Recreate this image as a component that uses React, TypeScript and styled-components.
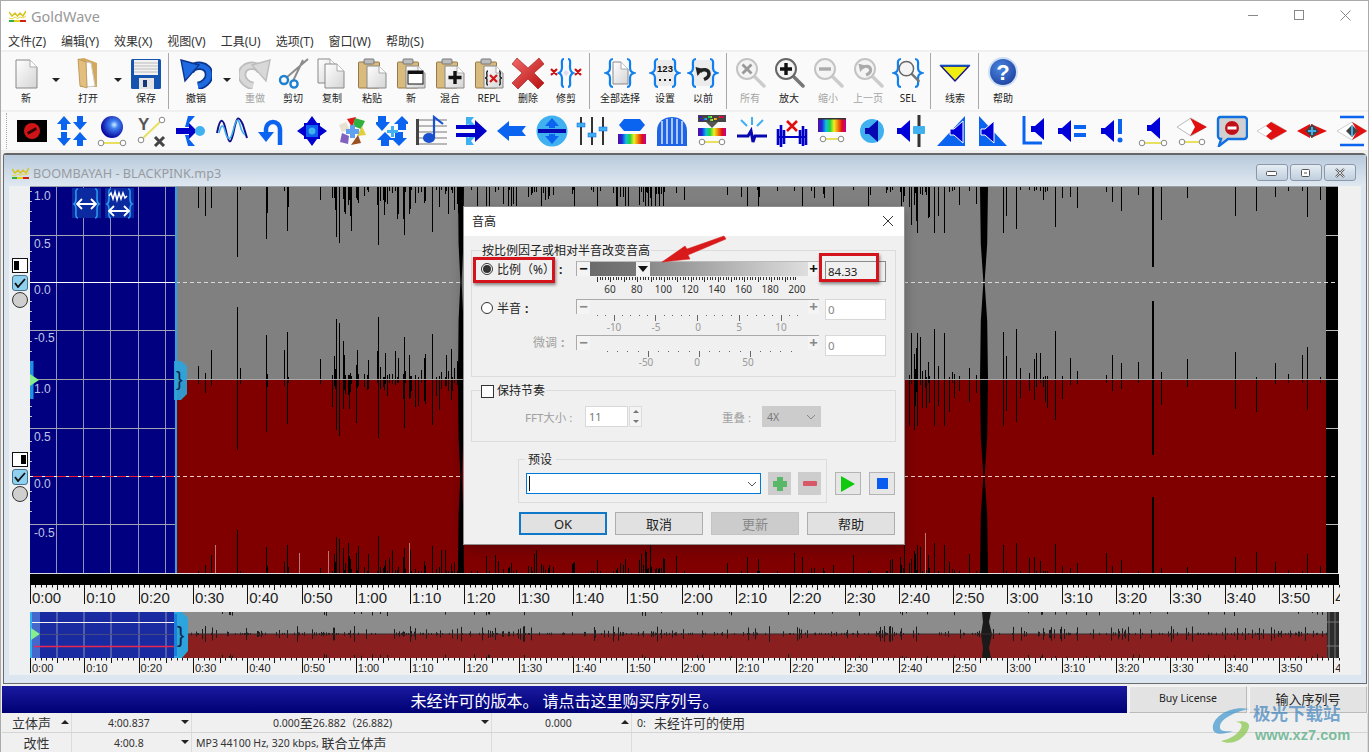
import React from "react";
import styled, { createGlobalStyle } from "styled-components";

const sans = `"Noto Sans", "Noto Sans CJK SC", sans-serif`;

const Global = createGlobalStyle`
  html, body { margin: 0; padding: 0; background: #f0f0f0; }
  * { box-sizing: border-box; }
`;

/* ---------- shell ---------- */
const Page = styled.div`
  position: relative; width: 1369px; height: 752px; overflow: hidden;
  background: #f0f0f0; font-family: ${sans}; color: #222;
  border-top: 1px solid #aaa; border-left: 1px solid #aaa; border-right: 1px solid #aaa;
  display: flex; flex-direction: column;
`;
const TitleBar = styled.div`
  height: 29px; background: #fff; display: flex; align-items: center; padding-left: 8px; flex: none;
`;
const AppName = styled.span`margin-left: 5px; font-size: 14.5px; color: #989898; flex: 1;`;
const WinButtons = styled.div`display: flex; margin-right: 0;`;
const WinButton = styled.div`width: 46px; height: 29px; display: flex; align-items: center; justify-content: center;`;
const MenuBar = styled.div`
  height: 20px; background: #fff; display: flex; gap: 15px; padding: 2px 0 0 7px; align-items: center;
  font-size: 12px; color: #333; flex: none;
`;
const Toolbar = styled.div`
  margin-top: 2px; height: 58px; background: #fafafa; display: flex; padding-left: 7px; flex: none;
`;
const ToolButton = styled.div<{ $w: number; $off?: boolean }>`
  width: ${p => p.$w}px; flex: none; display: flex; flex-direction: column; align-items: center;
  padding-top: 5px; font-size: 10px; line-height: 14px; color: ${p => (p.$off ? "#a4a4a4" : "#222")};
  white-space: nowrap;
  svg { display: block; margin-bottom: 2px; }
`;
const Caret = styled.div<{ $w: number }>`
  width: ${p => p.$w}px; flex: none; display: flex; justify-content: center; padding-top: 26px;
  &::after { content: ""; border-left: 4px solid transparent; border-right: 4px solid transparent; border-top: 4px solid #222; height: 0; }
`;
const Divider = styled.div<{ $w: number }>`
  width: ${p => p.$w}px; flex: none; display: flex; justify-content: center; padding: 1px 0;
  &::after { content: ""; width: 1px; background: #a8a8a8; }
`;
const IconBar = styled.div`
  margin-top: 2px; height: 39px; background: #fafafa; display: flex; align-items: center; flex: none; padding-left: 5px;
  border-bottom: 1px solid #eee;
`;
const Gripper = styled.div`width: 0; height: 36px; border-left: 1px dotted #aaa; margin-right: 5px;`;
const IconCell = styled.div`width: 40px; flex: none; display: flex; justify-content: center;`;

/* ---------- child window ---------- */
const ChildWindow = styled.div`
  margin: 2px 1px 0 2px; height: 531px; flex: none; border: 1px solid #6c6c6c; border-top: 2px solid #666;
  border-radius: 3px 5px 0 0; background: #dbe6f0; display: flex; flex-direction: column;
`;
const ChildTitle = styled.div`
  height: 31px; flex: none; display: flex; align-items: center; padding: 4px 10px 0 8px;
  background: linear-gradient(#b9cadc, #dfe8f1);
`;
const ChildName = styled.span`margin-left: 4px; font-size: 12.7px; color: #979ba0; flex: 1;`;
const ChildButton = styled.div`
  width: 32px; height: 17px; margin-left: 2px; border: 1px solid #8b98a8; border-radius: 3px;
  background: linear-gradient(#e6edf4, #bfcedd); display: flex; align-items: center; justify-content: center;
`;
const Client = styled.div`
  margin: 0 5px; background: #f0f0f0; height: 489px; flex: none; display: grid;
  grid-template-columns: 21px 1308px 1fr; grid-template-rows: 388px 38px 1fr;
  svg { display: block; }
`;
const Rail = styled.div`
  grid-row: 1 / 4; display: flex; flex-direction: column; background: #eef0f1;
`;
const RailChannel = styled.div`
  height: 194px; padding-top: 72px; display: flex; flex-direction: column; align-items: center; gap: 2px;
`;
const MonoBox = styled.div<{ $right?: boolean }>`
  width: 16px; height: 15px; background: #fff; border: 1px solid #111; display: flex;
  justify-content: ${p => (p.$right ? "flex-end" : "flex-start")}; align-items: center; padding: 0 1px;
  &::after { content: ""; width: 5px; height: 9px; background: #000; }
`;
const CheckBox = styled.div`
  width: 16px; height: 16px; border-radius: 3px; border: 1px solid #44728f; background: #8fd0ee;
  display: flex; align-items: center; justify-content: center;
`;
const RoundBox = styled.div`
  width: 16px; height: 16px; border-radius: 50%; border: 1px solid #333; background: #cfcfcf; margin-top: -1px;
`;
const ChartCell = styled.div`width: 1308px;`;
const BlankCell = styled.div``;

/* ---------- status ---------- */
const Banner = styled.div`
  margin-top: 2px; height: 27px; display: flex; gap: 2px; padding: 0 0 0 1px; flex: none;
`;
const BannerText = styled.div`
  width: 1125px; background: linear-gradient(#1a1aa0, #000074); color: #fff; font-size: 16px;
  display: flex; align-items: center; justify-content: center; white-space: pre;
`;
const BannerButton = styled.div<{ $w: number; $size: number }>`
  width: ${p => p.$w}px; background: #e3e3e3; border: 1px solid #f6f6f6; border-right-color: #bbb; border-bottom-color: #bbb;
  font-size: ${p => p.$size}px; display: flex; align-items: center; justify-content: center; color: #222; padding-bottom: 3px;
`;
const StatusRow = styled.div`
  height: 20px; flex: none; display: grid; grid-template-columns: 70px 120px 300px 140px 1fr;
  margin-left: 1px; border-bottom: 1px solid #d4d4d4; font-size: 10.5px; color: #333; padding-bottom: 1px;
`;
const StatusCell = styled.div<{ $pad?: number; $center?: boolean }>`
  display: flex; align-items: center; position: relative; border-right: 1px solid #dcdcdc;
  padding-left: ${p => p.$pad ?? 0}px; white-space: nowrap;
  ${p => (p.$center ? "justify-content: center;" : "")}
`;
const Big = styled.span`font-size: 13px;`;
const StatusCaret = styled.i<{ $up?: boolean }>`
  position: absolute; right: 2px; top: 7px; border-left: 4px solid transparent; border-right: 4px solid transparent;
  ${p => (p.$up ? "border-bottom: 4px solid #222;" : "border-top: 4px solid #222;")}
`;
const Watermark = styled.div`
  position: absolute; left: 1206px; top: 700px; width: 152px; height: 50px; pointer-events: none;
`;
const MarkTitle = styled.div`
  position: absolute; left: 46px; top: 1px; font-size: 17.5px; line-height: 22px; font-weight: 700;
  color: rgba(70, 135, 190, .72); white-space: nowrap;
`;
const MarkUrl = styled.div`
  position: absolute; left: 48px; top: 25px; font-size: 14.6px; line-height: 18px; font-weight: 700;
  font-family: "Liberation Sans", sans-serif; color: rgba(70, 165, 120, .7);
`;

/* ---------- dialog ---------- */
const Dialog = styled.div`
  position: absolute; left: 463px; top: 206px; width: 440px; height: 337px; background: #f0f0f0;
  box-shadow: 0 0 0 1px #8f8f8f, 0 4px 12px rgba(0,0,0,.3); font-size: 12px; color: #222;
`;
const DialogTitle = styled.div`
  height: 29px; background: #fff; display: flex; align-items: center; justify-content: space-between; padding: 0 10px 2px 8px; font-size: 12px;
`;
const Group = styled.div<{ $h: number; $mt: number; $ml?: number; $w?: number; $pt?: number }>`
  position: relative; height: ${p => p.$h}px; margin-top: ${p => p.$mt}px; margin-left: ${p => p.$ml ?? 7}px;
  width: ${p => p.$w ?? 425}px; border: 1px solid #dcdcdc; padding-top: ${p => p.$pt ?? 0}px;
`;
const Legend = styled.div<{ $x: number }>`
  position: absolute; left: ${p => p.$x}px; top: -8px; background: #f0f0f0; padding: 0 1px 0 0; line-height: 16px;
  display: flex; align-items: center; gap: 3px; white-space: nowrap;
`;
const SlideRow = styled.div<{ $h: number }>`
  display: flex; height: ${p => p.$h}px; padding-left: 9px;
`;
const RowLabel = styled.div<{ $off?: boolean; $indent?: number; $shift?: number }>`
  width: 95px; height: 16px; flex: none; display: flex; align-items: center; gap: 4px; white-space: nowrap;
  color: ${p => (p.$off ? "#a0a0a0" : "#222")}; padding-left: ${p => p.$indent ?? 0}px; margin-top: ${p => p.$shift ?? 0}px;
`;
const Colon = styled.span`margin-left: 0; font-weight: 700;`;
const Radio = styled.span<{ $on?: boolean }>`
  width: 12px; height: 12px; border-radius: 50%; border: 1px solid #333; background: #fff; flex: none;
  display: flex; align-items: center; justify-content: center;
  &::after { content: ""; width: 8px; height: 8px; border-radius: 50%; background: ${p => (p.$on ? "#333" : "transparent")}; }
`;
const SlideCol = styled.div`width: 243px; flex: none;`;
const Track = styled.div<{ $off?: boolean }>`
  height: 15px; display: flex; border-top: 1px solid ${p => (p.$off ? "#aaa" : "#bbb")}; border-left: 1px solid #aaa;
  background: #f0f0f0;
`;
const TrackEnd = styled.div<{ $w: number; $off?: boolean }>`
  width: ${p => p.$w}px; flex: none; font-size: 15px; font-weight: 700; line-height: 13px; text-align: center;
  color: ${p => (p.$off ? "#888" : "#111")}; background: #f4f4f4;
`;
const TrackDark = styled.div`width: 46px; background: linear-gradient(90deg, #6b6b6b, #777);`;
const TrackThumb = styled.div`
  width: 14px; background: #f2f2f2; display: flex; align-items: center; justify-content: center;
  &::after { content: ""; border-left: 5px solid transparent; border-right: 5px solid transparent; border-top: 6px solid #111; }
`;
const TrackRest = styled.div<{ $off?: boolean }>`
  flex: 1; background: ${p => (p.$off ? "#f0f0f0" : "linear-gradient(90deg, #8a8a8a, #dedede)")};
`;
const NumBox = styled.div<{ $off?: boolean; $w?: number; $h?: number }>`
  width: ${p => p.$w ?? 61}px; height: ${p => p.$h ?? 21}px; flex: none; margin-left: 6px; background: ${p => (p.$off ? "#fff" : "#f0f0f0")};
  border: 1px solid ${p => (p.$off ? "#d8d8d8" : "#8a8a8a")}; padding-left: 2px; font-size: 11.5px; line-height: 19px;
  color: ${p => (p.$off ? "#888" : "#222")};
`;
const Highlight = styled.div<{ $x: number; $y: number; $w: number; $h: number }>`
  position: absolute; left: ${p => p.$x}px; top: ${p => p.$y}px; width: ${p => p.$w}px; height: ${p => p.$h}px;
  border: 3px solid #d5131c; box-shadow: 1px 2px 3px rgba(0,0,0,.45);
`;
const ArrowLayer = styled.svg`position: absolute; left: 0; top: 0; pointer-events: none;`;
const OptRow = styled.div`display: flex; align-items: center; height: 21px; margin-top: 15px; font-size: 11.5px; color: #a0a0a0;`;
const OptLabel = styled.span<{ $w: number; $ml: number }>`width: ${p => p.$w}px; margin-left: ${p => p.$ml}px; white-space: nowrap;`;
const Spin = styled.div`
  width: 43px; height: 21px; background: #fff; border: 1px solid #d8d8d8; padding-left: 3px; font-size: 11px; line-height: 19px; color: #777;
`;
const SpinBtns = styled.div`
  width: 13px; height: 21px; margin-left: 1px; display: flex; flex-direction: column; justify-content: space-around; align-items: center;
  background: #f4f4f4; border: 1px solid #dcdcdc;
`;
const SpinTip = styled.i<{ $down?: boolean }>`
  border-left: 3px solid transparent; border-right: 3px solid transparent;
  ${p => (p.$down ? "border-top: 3px solid #777;" : "border-bottom: 3px solid #777;")}
`;
const Drop = styled.div`
  width: 59px; height: 21px; background: #ccc; display: flex; align-items: center; justify-content: space-between;
  padding: 0 5px 0 5px; font-size: 10.5px; color: #777;
`;
const PresetLine = styled.div`display: flex; margin-top: 17px;`;
const PresetInner = styled.div`display: flex; align-items: center; padding: 12px 0 0 7px; gap: 7px;`;
const Combo = styled.div`
  width: 235px; height: 21px; background: #fff; border: 1px solid #0078d7; display: flex; align-items: center;
  justify-content: space-between; padding: 0 3px 0 2px; margin-right: 0;
`;
const TextCaret = styled.div`width: 1px; height: 15px; background: #111;`;
const IconBtn = styled.div<{ $w: number; $off?: boolean; $ml?: number }>`
  width: ${p => p.$w}px; height: 23px; flex: none; margin-left: ${p => p.$ml ?? 0}px; background: ${p => (p.$off ? "#cdcdcd" : "#e6e6e6")};
  border: 1px solid ${p => (p.$off ? "#cdcdcd" : "#b4b4b4")}; display: flex; align-items: center; justify-content: center;
`;
const PlayGroup = styled.div`display: flex; gap: 8px; margin-left: 8px; padding-top: 13px; align-items: flex-start;`;
const Footer = styled.div`display: flex; gap: 8px; margin: 9px 0 0 55px;`;
const FootBtn = styled.div<{ $primary?: boolean; $off?: boolean }>`
  width: 88px; height: 23px; display: flex; align-items: center; justify-content: center; font-size: 13px;
  background: ${p => (p.$off ? "#cccccc" : "#e1e1e1")}; color: ${p => (p.$off ? "#888" : "#222")};
  border: ${p => (p.$primary ? "2px solid #0f78c8" : p.$off ? "1px solid #c4c4c4" : "1px solid #adadad")};
`;

/* ---------- icon helpers ---------- */
const I: React.FC<{ children: React.ReactNode; s?: number }> = ({ children, s = 32 }) => (
  <svg width={s} height={s} viewBox="0 0 32 32">{children}</svg>
);
const B1 = "#0a64f0", NV = "#0000c8", LB = "#3fb0f0";

const rainbowStops = ["#5a0a9c", "#1a2ae0", "#10c0e0", "#20d040", "#f0f020", "#f08010", "#e01010", "#c000a0"];
const Rb = ({ id }: { id: string }) => (
  <defs><linearGradient id={id}>{rainbowStops.map((c, i) => <stop key={c} offset={i / 7} stopColor={c} />)}</linearGradient></defs>
);
const PageSheet = ({ x = 6, y = 3, w = 21, h = 28, id = "pg" }: { x?: number; y?: number; w?: number; h?: number; id?: string }) => (
  <>
    <defs><linearGradient id={id} x1="0" y1="0" x2="1" y2="1"><stop offset="0" stopColor="#fff" /><stop offset="1" stopColor="#d4d4d4" /></linearGradient></defs>
    <path d={`M${x} ${y}h${w - 7}l7 7v${h - 7}H${x}z`} fill={`url(#${id})`} stroke="#888" />
    <path d={`M${x + w - 7} ${y}v7h7`} fill="#fff" stroke="#aaa" />
  </>
);
const Clip = ({ id, children }: { id: string; children?: React.ReactNode }) => (
  <>
    <rect x="2.5" y="5" width="21" height="26" rx="1" fill="#d9bb7e" stroke="#96794a" />
    <rect x="8" y="2" width="10" height="5" rx="1" fill="#bdbdbd" stroke="#777" />
    <PageSheet x={11} y={9} w={19} h={22} id={id} />
    {children}
  </>
);
const BraceL = ({ c = "#1080f0" }: { c?: string }) => (
  <path d="M9 2C5 2 6 6 6 10c0 4-1 5-4 6 3 1 4 2 4 6 0 4-1 8 3 8" fill="none" stroke={c} strokeWidth="2.2" />
);
const BraceR = ({ c = "#1080f0" }: { c?: string }) => (
  <path d="M23 2c4 0 3 4 3 8 0 4 1 5 4 6-3 1-4 2-4 6 0 4 1 8-3 8" fill="none" stroke={c} strokeWidth="2.2" />
);
const Lens = ({ off, children }: { off?: boolean; children?: React.ReactNode }) => (
  <>
    <path d="M20 19l10 10" stroke={off ? "#ccc" : "#777"} strokeWidth="3.5" strokeLinecap="round" />
    <circle cx="13" cy="12" r="10" fill="#f4f4f4" stroke={off ? "#c4c4c4" : "#666"} strokeWidth="2" />
    {children}
  </>
);
const Knob = ({ y = 28, a = 4, b = 28 }: { y?: number; a?: number; b?: number }) => (
  <>
    <path d={`M${a} ${y}H${b}`} stroke="#e8e060" strokeWidth="2" />
    <circle cx={a} cy={y} r="2.8" fill="#fff" stroke="#888" />
    <circle cx={b} cy={y} r="2.8" fill="#fff" stroke="#888" />
  </>
);
const Spk = ({ x = 0, y = 0, c = NV, edge }: { x?: number; y?: number; c?: string; edge?: string }) => (
  <path transform={`translate(${x} ${y})`} d="M0 8h4L13 0v22L4 14H0z" fill={c} stroke={edge ?? "none"} strokeWidth="1" />
);
const Up = ({ x, y, c = B1, flip }: { x: number; y: number; c?: string; flip?: boolean }) => (
  <path d={flip ? `M${x} ${y + 14}l-7-8h4v-6h6v6h4z` : `M${x} ${y}l7 8h-4v6h-6v-6h-4z`} fill={c} />
);
const Dia = ({ c = "#fff" }: { c?: string }) => <path d="M1 16L16 7l15 9-15 9z" fill={c} stroke="#bbb" strokeWidth=".7" />;

const UndoShape = ({ dark, mid }: { dark: string; mid: string }) => (
  <>
    <path d="M10 14C14 6 29 7 29 18c0 6-6 10-11 11" fill="none" stroke={dark} strokeWidth="8.5" />
    <path d="M10 14C14 6 29 7 29 18c0 6-6 10-11 11" fill="none" stroke={mid} strokeWidth="5" />
    <path d="M1 3l18 5-14 16z" fill={mid} stroke={dark} strokeWidth="1.4" />
  </>
);

const row1 = [
  { k: "new", w: 36, l: "新", i: <PageSheet id="p1" /> },
  { k: "c1", caret: 24 },
  {
    k: "open", w: 40, l: "打开", i: (
      <>
        <path d="M6 2l6-1 13 5v24H8z" fill="#d4a85c" />
        <path d="M14 5l5 1 4 23-8 1z" fill="#fff" stroke="#ccc" />
        <path d="M6 2l8 3 1 26-7-2z" fill="#e2bf7e" stroke="#b08c4c" strokeWidth=".7" />
      </>
    )
  },
  { k: "c2", caret: 20 },
  {
    k: "save", w: 36, l: "保存", i: (
      <>
        <rect x="1" y="2" width="30" height="30" rx="1.5" fill="#1454ae" />
        <rect x="4" y="3" width="24" height="15" fill="#f2f2f2" />
        <path d="M4 6h24M4 9h24M4 12h24M4 15h24" stroke="#bbb" />
        <rect x="9" y="21" width="15" height="11" fill="#e4e4e4" />
        <rect x="13" y="23" width="4" height="7" fill="#123a78" />
      </>
    )
  },
  { k: "s1", sep: 8 },
  { k: "undo", w: 48, l: "撤销", i: <UndoShape dark="#0a3690" mid="#1e6ae0" /> },
  { k: "c3", caret: 14 },
  { k: "redo", w: 42, l: "重做", off: true, i: <g transform="matrix(-1 0 0 1 32 0)"><UndoShape dark="#bcbcbc" mid="#d8d8d8" /></g> },
  {
    k: "cut", w: 34, l: "剪切", i: (
      <>
        <path d="M9 21L31 2M16 24L26 3" stroke="#8c8c8c" strokeWidth="2" />
        <circle cx="7" cy="23" r="4" fill="none" stroke="#1f82d0" strokeWidth="2.4" />
        <circle cx="17" cy="27" r="3.6" fill="none" stroke="#1f82d0" strokeWidth="2.4" />
      </>
    )
  },
  { k: "copy", w: 44, l: "复制", i: <><PageSheet x={2} y={2} w={19} h={24} id="p2" /><PageSheet x={9} y={7} w={19} h={24} id="p3" /></> },
  { k: "paste", w: 36, l: "粘贴", i: <Clip id="p4" /> },
  {
    k: "pn", w: 42, l: "新", i: <Clip id="p5"><rect x="13" y="14" width="15" height="13" fill="#fff" stroke="#111" /><rect x="13" y="14" width="15" height="3" fill="#111" /></Clip>
  },
  { k: "mix", w: 36, l: "混合", i: <Clip id="p6"><path d="M21 14v13M14.500 20.500h13" stroke="#111" strokeWidth="3.4" /></Clip> },
  {
    k: "repl", w: 42, l: "REPL", i: (
      <Clip id="p7">
        <path d="M15 14c-2 0-1 3-1 5s-1 2-2 2c1 0 2 0 2 2s-1 5 1 5M26 14c2 0 1 3 1 5s1 2 2 2c-1 0-2 0-2 2s1 5-1 5" fill="none" stroke="#222" strokeWidth="1.4" />
        <path d="M17 18l7 7M24 18l-7 7" stroke="#d01818" strokeWidth="2.2" />
      </Clip>
    )
  },
  {
    k: "del", w: 36, l: "删除", i: (
      <>
        <defs><linearGradient id="rx" x1="0" y1="0" x2="1" y2="1"><stop offset="0" stopColor="#f06a6a" /><stop offset="1" stopColor="#b80f0f" /></linearGradient></defs>
        <path d="M5 1l11 10L27 1l5 6-10 9 10 10-6 6-10-10L6 32l-6-6 10-10L0 7z" fill="url(#rx)" stroke="#a01414" strokeWidth=".6" />
      </>
    )
  },
  {
    k: "trim", w: 40, l: "修剪", i: (
      <>
        <g transform="translate(3 0)"><path d="M11 2C8 2 9 6 9 10s-1 5-3 6c2 1 3 2 3 6s-1 8 2 8" fill="none" stroke="#1080f0" strokeWidth="2.2" /></g>
        <g transform="translate(-3 0)"><path d="M21 2c3 0 2 4 2 8s1 5 3 6c-2 1-3 2-3 6s1 8-2 8" fill="none" stroke="#1080f0" strokeWidth="2.2" /></g>
        <path d="M1 12l6 6M7 12l-6 6M25 12l6 6M31 12l-6 6" stroke="#d01010" strokeWidth="2.2" />
        <path d="M16 13l3 3-3 3-3-3z" fill="#dde" />
      </>
    )
  },
  { k: "s2", sep: 7 },
  { k: "sel", w: 54, l: "全部选择", i: <><BraceL /><BraceR /><PageSheet x={9} y={5} w={15} h={22} id="p8" /></> },
  {
    k: "set", w: 36, l: "设置", i: (
      <>
        <rect x="7" y="3" width="18" height="26" fill="#ececec" />
        <BraceL /><BraceR />
        <text x="16" y="15" fontSize="9.500" fontFamily="Liberation Sans" fontWeight="700" textAnchor="middle" fill="#111">123</text>
        <path d="M10 23h2M15 23h2M20 23h2" stroke="#222" strokeWidth="2" />
      </>
    )
  },
  {
    k: "prev", w: 40, l: "以前", i: (
      <>
        <rect x="7" y="3" width="18" height="26" fill="#ececec" />
        <BraceL /><BraceR />
        <g transform="translate(8 8) scale(.5)"><path d="M10 14C14 7 28 8 28 18c0 5-5 9-10 11" fill="none" stroke="#222" strokeWidth="7" /><path d="M1 4l16 4-12 14z" fill="#222" /></g>
      </>
    )
  },
  { k: "s3", sep: 6 },
  { k: "all", w: 42, l: "所有", off: true, i: <Lens off><path d="M8.500 7.500l9 9M17.500 7.500l-9 9" stroke="#999" strokeWidth="2.8" /></Lens> },
  { k: "zin", w: 36, l: "放大", i: <Lens><path d="M13 6v12M7 12h12" stroke="#111" strokeWidth="3.4" /></Lens> },
  { k: "zout", w: 42, l: "缩小", off: true, i: <Lens off><path d="M7 12h12" stroke="#aaa" strokeWidth="3.4" /></Lens> },
  {
    k: "zp", w: 38, l: "上一页", off: true, i: (
      <Lens off><g transform="translate(6 5) scale(.45)"><path d="M10 14C14 7 28 8 28 18c0 5-5 9-10 11" fill="none" stroke="#aaa" strokeWidth="7" /><path d="M1 4l16 4-12 14z" fill="#aaa" /></g></Lens>
    )
  },
  { k: "zsel", w: 42, l: "SEL", i: <><BraceL /><BraceR /><g transform="translate(5 3) scale(.72)"><Lens /></g></> },
  { k: "s4", sep: 3 },
  {
    k: "cue", w: 46, l: "线索", i: (
      <>
        <path d="M2 9h28L16 24z" fill="#f0ee10" stroke="#101090" strokeWidth="1.4" />
        <path d="M1 8.500h30" stroke="#1050c0" strokeWidth="1.6" />
      </>
    )
  },
  { k: "s5", sep: 1 },
  {
    k: "help", w: 48, l: "帮助", i: (
      <>
        <defs><radialGradient id="hb" cx=".4" cy=".35" r=".8"><stop offset="0" stopColor="#4a86e0" /><stop offset="1" stopColor="#1a3a9a" /></radialGradient></defs>
        <circle cx="16" cy="15" r="15" fill="#cfe0f4" />
        <circle cx="16" cy="15" r="13" fill="url(#hb)" />
        <text x="16" y="23" fontSize="22" fontFamily="Liberation Sans" fontWeight="700" textAnchor="middle" fill="#fff">?</text>
      </>
    )
  },
] as const;

const row2: React.ReactNode[] = [
  <><rect x="1" y="5" width="30" height="22" fill="#000" /><circle cx="16" cy="16" r="8" fill="#d01416" /><rect x="11" y="14.500" width="10" height="3" fill="#300" transform="rotate(-30 16 16)" /></>,
  <><Up x={8} y={1} /><Up x={24} y={1} flip /><Up x={24} y={17} /><Up x={8} y={17} flip /></>,
  <>
    <defs><radialGradient id="bl" cx=".6" cy=".4" r=".6"><stop offset="0" stopColor="#d0f0ff" /><stop offset=".3" stopColor="#4080f0" /><stop offset="1" stopColor="#0808a0" /></radialGradient></defs>
    <circle cx="16" cy="12" r="11" fill="url(#bl)" /><Knob y={28} a={5} b={27} />
  </>,
  <>
    <text x="2" y="15" fontSize="17" fontWeight="700" fontFamily="Liberation Sans" fill="#555">Y</text>
    <path d="M19 22l9 9M28 22l-9 9" stroke="#444" strokeWidth="3" />
    <path d="M5 25L26 5" stroke="#e8e060" strokeWidth="2" />
    <circle cx="26" cy="5" r="2.800" fill="#fff" stroke="#888" /><circle cx="5" cy="25" r="2.800" fill="#fff" stroke="#888" />
  </>,
  <>
    <path d="M12 1h7l-6 7v4h-4zM12 31h7l-6-7v-4h-4z" fill={B1} />
    <rect x="0" y="13" width="15" height="6" fill={NV} /><path d="M13 8l8 8-8 8z" fill={NV} />
    <circle cx="24" cy="16" r="5" fill={LB} />
  </>,
  <>
    <path d="M1 18C4 2 7 2 10 16S15 30 18 15 23 1 27 10l4 13" fill="none" stroke="#10108c" strokeWidth="2" />
    <path d="M3 18c2-8 4-10 6-2s5 12 8 0 5-14 7-6 3 8 5 10" fill="none" stroke={LB} strokeWidth="1.500" />
  </>,
  <>
    <path d="M24 30V14a7 7 0 0 0-14 0v4" fill="none" stroke={B1} strokeWidth="4.500" />
    <path d="M2 17h16l-8 10z" fill={B1} />
  </>,
  <>
    <path d="M16 1l5 7h3v3l7 5-7 5v3h-3l-5 7-5-7H8v-3l-7-5 7-5V8h3z" fill="#0000d0" />
    <rect x="10" y="10" width="12" height="12" fill="#1060f0" />
    <circle cx="16" cy="16" r="3.500" fill={LB} />
  </>,
  <>
    <path d="M3 10l7-3 4 8-8 2z" fill="#e8e0d0" />
    <path d="M11 4l9-2-4 10z" fill="#e01818" />
    <path d="M19 3l10 3-4 8-8-3z" fill="#30b040" />
    <path d="M26 11l4 9-9 1z" fill="#e0d040" />
    <path d="M22 20l3 8-10 2z" fill="#9a5020" />
    <path d="M6 18l7 3-1 8-8-2z" fill="#8060c0" />
    <path d="M14 10h5v4h4v5h-4v4h-5v-4h-4v-5h4z" fill="#60a0f0" />
  </>,
  <>
    <path d="M4 1h8v6h4l-8 9-8-9h4zM28 1l8 8h-4v6h-8V9h-4z" transform="translate(-2 0)" fill={B1} />
    <path d="M9 17l8 8h-4v6H5v-6H1zM23 31l8-8h-4v-6h-8v6h-4z" fill={B1} />
    <path d="M15 11h3v4h4v3h-4v4h-3v-4h-4v-3h4z" fill={LB} />
  </>,
  <>
    <path d="M1 5h30M1 11h30M1 17h30M1 23h30M1 29h30" stroke="#777" />
    <rect x="0" y="4" width="3" height="26" fill="#444" />
    <ellipse cx="13" cy="23" rx="6" ry="5" fill="#1850d0" />
    <path d="M18 23V2l9 7" fill="none" stroke="#1850d0" strokeWidth="2.2" />
  </>,
  <>
    <path d="M10 2h8l-3 4 5 5-3 3-5-5-2 3zM10 30h8l-3-4 5-5-3-3-5 5-2-3z" fill={LB} />
    <rect x="0" y="10" width="20" height="4" fill={NV} /><rect x="0" y="18" width="20" height="4" fill={NV} />
    <path d="M19 5l12 11-12 11z" fill={NV} />
  </>,
  <path d="M1 16L13 6v5h17l-4 5 4 5H13v5z" fill={B1} />,
  <>
    <circle cx="16" cy="16" r="15.500" fill={LB} />
    <rect x="2" y="14" width="28" height="4" fill="#0808b0" />
    <path d="M16 3l7 8h-4v2h-6v-2H9zM16 29l7-8h-4v-2h-6v2H9z" fill={B1} />
  </>,
  <>
    <path d="M5 2v28M16 2v28M27 2v28" stroke="#333" strokeWidth="2" />
    <rect x="1" y="8" width="8" height="4" fill={LB} stroke={B1} strokeWidth=".5" />
    <rect x="12" y="18" width="8" height="4" fill={LB} stroke={B1} strokeWidth=".5" />
    <rect x="23" y="12" width="8" height="4" fill={LB} stroke={B1} strokeWidth=".5" />
  </>,
  <>
    <Rb id="r1" />
    <path d="M8 4h16l5 6-5 6H8l-5-6z" fill={B1} />
    <rect x="2" y="19" width="28" height="10" fill="url(#r1)" />
  </>,
  <>
    <path d="M1 31V16C1 6 9 2 16 2s15 4 15 14v15z" fill="#1e64e8" />
    <path d="M6 6v23M11 4v25M16 3v26M21 4v25M26 6v23" stroke="#e8f0ff" strokeWidth="1.400" />
    <rect x="1" y="29" width="30" height="2" fill="#1e64e8" />
  </>,
  <>
    <Rb id="r2" />
    <rect x="2" y="0" width="28" height="7" fill="#444" />
    <path d="M3 2h3M8 4h3M12 2h4M18 4h3M23 2h5M4 5h3M14 5h3" stroke="url(#r2)" strokeWidth="2" />
    <path d="M10 7h12l-6 6z" fill="#555" />
    <rect x="2" y="13" width="28" height="8" fill="url(#r2)" />
    <Knob y={27} a={6} b={26} />
  </>,
  <>
    <path d="M16 2v8M5 5l6 6M27 5l-6 6" stroke={LB} strokeWidth="2" />
    <path d="M1 21h11l3-5 2 11 2-6h12" fill="none" stroke="#0808b0" strokeWidth="3" />
  </>,
  <>
    <path d="M1 22h6M25 22h6" stroke={NV} strokeWidth="2" />
    <path d="M2 14v16M5 10v22M8 15v14M24 15v14M27 11v20M30 14v16" stroke={NV} strokeWidth="2.600" />
    <path d="M8 22h16" stroke={NV} strokeWidth="2" />
    <path d="M11 6l10 10M21 6L11 16" stroke="#e01010" strokeWidth="2.600" />
  </>,
  <><Rb id="r3" /><rect x="2" y="4" width="28" height="13" fill="url(#r3)" /><rect x="2" y="3" width="28" height="1.500" fill="#333" /><Knob y={24} a={7} b={25} /></>,
  <><circle cx="16" cy="16" r="12" fill={LB} /><Spk x={9} y={5} c="#0808b0" /></>,
  <>
    <Spk x={1} y={5} c="#0000d8" />
    <path d="M23 0v32" stroke="#333" strokeWidth="3" /><rect x="17" y="11" width="12" height="8" rx="1" fill={LB} />
  </>,
  <>
    <path d="M1 31L29 1v30z" fill={B1} />
    <Spk x={14} y={6} c="#0000d8" edge="#fff" />
  </>,
  <>
    <path d="M3 1l28 30H3z" fill={B1} />
    <Spk x={5} y={6} c="#0000d8" edge="#fff" />
  </>,
  <>
    <path d="M8 1v27h18" fill="none" stroke={B1} strokeWidth="3" />
    <Spk x={15} y={3} c="#0000d8" />
  </>,
  <>
    <Spk x={2} y={5} c="#0000d8" />
    <rect x="18" y="10" width="12" height="4" fill={B1} /><rect x="18" y="18" width="12" height="4" fill={B1} />
  </>,
  <>
    <Spk x={5} y={5} c="#0000d8" />
    <rect x="22" y="4" width="4" height="15" fill={B1} /><circle cx="24" cy="25" r="2.500" fill={B1} />
  </>,
  <><Spk x={11} y={2} c="#0000d8" /><Knob y={28} a={6} b={28} /></>,
  <>
    <path d="M1 12L15 3l15 9-15 9z" fill="#fff" stroke="#bbb" />
    <path d="M14 3l17 9-17 9 5-9z" fill="#e01010" />
    <Knob y={27} a={6} b={26} />
  </>,
  <>
    <path d="M4 2h24a3 3 0 0 1 3 3v16a3 3 0 0 1-3 3H12L3 31l2-7a3 3 0 0 1-3-3V5a3 3 0 0 1 2-3z" fill="#d0d0d0" stroke="#1070e0" strokeWidth="2.400" />
    <circle cx="16" cy="13" r="7" fill="#c01018" /><rect x="11.500" y="11.500" width="9" height="3" fill="#fff" />
  </>,
  <><Dia /><path d="M10 11l5-4 16 9-16 9-5-4 6-5z" fill="#e01010" /></>,
  <><path d="M1 16l13-7v14z" fill="#e01010" /><path d="M15 9L31 16 15 23z" fill="#e01010" /><path d="M9 16l7-7 7 7-7 7z" fill="#444" /><path d="M15 12h2v3h3v2h-3v3h-2v-3h-3v-2h3z" fill={LB} /></>,
  <>
    <Dia />
    <path d="M16 7l15 9-15 9 5-9z" fill="#e01010" />
    <path d="M10 16l6-6 6 6-6 6z" fill="#444" /><path d="M15 11h2v10h-2z" fill={LB} />
    <path d="M4 2h24M4 30h24" stroke={B1} strokeWidth="2.400" />
  </>,
];

/* ---------- waveform data ---------- */
function mulberry(a: number) {
  return () => {
    a |= 0; a = (a + 0x6d2b79f5) | 0;
    let t = Math.imul(a ^ (a >>> 15), 1 | a);
    t = (t + Math.imul(t ^ (t >>> 7), 61 | t)) ^ t;
    return ((t ^ (t >>> 14)) >>> 0) / 4294967296;
  };
}
const clusters: [number, number, number][] = [
  [177, 335, 0.06], [335, 362, 0.5], [362, 378, 0.12], [378, 460, 0.3], [466, 560, 0.24], [560, 640, 0.16], [640, 668, 0.7],
  [668, 900, 0.12], [900, 925, 0.5], [925, 980, 0.16], [990, 1060, 0.13], [1060, 1150, 0.12], [1150, 1327, 0.045],
];
const big: [number, number, number][] = [
  [238, 70, 72], [267, 52, 44], [288, 44, 47], [337, 50, 60], [340, 56, 56], [379, 58, 62], [405, 48, 42], [433, 45, 45],
  [918, 46, 46], [935, 46, 50], [945, 46, 46], [1004, 46, 47], [1017, 42, 50], [1056, 40, 48], [1154, 72, 78], [1236, 29, 27], [1308, 30, 32],
];
type Spike = { x: number; a: number; b: number; c: number; d: number };
const spikes: Spike[] = (() => {
  const r = mulberry(8675309);
  const out: Spike[] = [];
  clusters.forEach(([s, e, dens]) => {
    for (let x = s; x < e; x++) {
      if (r() < dens) {
        const heavy = dens > 0.3 ? 1.15 : 0.75;
        const len = () => (4 + Math.pow(r(), 2) * 42) * heavy;
        const low = () => (3 + Math.pow(r(), 2.6) * 42) * heavy;
        out.push({ x, a: len(), b: low(), c: len() * 0.95, d: low() * 0.7 });
      }
    }
  });
  big.forEach(([x, up, low]) => out.push({ x, a: up, b: low, c: up, d: low * 0.6 }));
  return out;
})();
const sp = (top: number, pick: (s: Spike) => number, dir: 1 | -1) =>
  spikes.map(s => `M${s.x + 0.5} ${top}v${(dir * pick(s)).toFixed(1)}`).join("");
const hourglass = (x: number, w: number, t: number, m: number, b: number) =>
  `M${x} ${t}h${w}l${-w * 0.1} ${(m - t) * 0.6}L${x + w / 2 + 0.6} ${m}L${x + w * 0.9} ${b - (b - m) * 0.6}L${x + w} ${b}h${-w}L${x + w * 0.1} ${b - (b - m) * 0.6}L${x + w / 2 - 0.6} ${m}L${x + w * 0.1} ${(m - t) * 0.6 + t}z`;

const overviewSpikes = (() => {
  const r = mulberry(4242);
  let d = "";
  for (let x = 188; x < 1327; x += 1) {
    if (r() < 0.3) {
      const l = 1 + Math.pow(r(), 3.5) * 7;
      d += `M${x + 0.5} ${(634 - l).toFixed(1)}v${(2 * l).toFixed(1)}`;
    }
    if (r() < 0.05) d += `M${x + 0.5} 612v${(1 + r() * 3).toFixed(1)}M${x + 0.5} 658v${(-1 - r() * 3).toFixed(1)}`;
  }
  return d;
})();

const WaveChart = () => (
  <svg width="1308" height="388" viewBox="31 185 1308 388" shapeRendering="crispEdges">
    <rect x="31" y="185" width="1308" height="388" fill="#808080" />
    <rect x="31" y="378" width="1308" height="195" fill="#800000" />
    <path d={sp(186, s => s.a, 1) + sp(378, s => s.b, -1) + sp(379, s => s.c, 1) + sp(572, s => s.d, -1)} stroke="#000" fill="none" />
    <path d="M300 572v-20M216 572v-28M329 572v-22M410 572v-30" stroke="#b87878" />
    <path d="M926 572v-40" stroke="#b87878" />
    <path d={hourglass(981, 8, 186, 281, 378) + hourglass(981, 8, 379, 475, 572) + hourglass(459, 6, 186, 281, 378) + hourglass(459, 6, 379, 475, 572)} fill="#000" shapeRendering="auto" />
    <path d="M1154 186v80M1154 378v-78M1154 379v75M1154 572v-76" stroke="#000" strokeWidth="1.500" />
    <rect x="1327" y="186" width="12" height="386" fill="#000" />
    <path d="M177 281H1339" stroke="#d8d8d8" strokeDasharray="4 3" />
    <path d="M177 475H1339" stroke="#f0c8c8" strokeDasharray="4 3" />
    <path d="M1327 234h12M1327 329h12M1327 427h12M1327 523h12" stroke="#bbb" />
    <path d="M31 185H1339" stroke="#9aa0a6" />
    <path d="M31 378H1339" stroke="#aaa" />
    <path d="M31 572H1339" stroke="#e4e4e4" />
    {/* selection */}
    <rect x="31" y="186" width="145" height="386" fill="#000080" />
    <path d="M57 186V572M84 186V572M111 186V572M139 186V572M166 186V572" stroke="#8f94b8" />
    <path d="M31 234H176M31 329H176M31 427H176M31 523H176" stroke="#a4a4b4" />
    <path d="M31 378.500H176" stroke="#a0a0a0" />
    <path d="M31 281H176" stroke="#fff" />
    <path d="M31 475H176" stroke="#f01838" />
    <path d="M31 475H176" stroke="#fff" strokeDasharray="3 9" />
    <path d="M31 572H176" stroke="#ddd" />
    <rect x="176" y="186" width="1.500" height="386" fill="#2ea0e8" />
    {[["1.0", 199], ["0.5", 247], ["0.0", 293], ["-0.5", 341], ["1.0", 392], ["0.5", 440], ["0.0", 487], ["-0.5", 536]].map(([t, y], i) => (
      <text key={i} x={35} y={y} fontFamily="Liberation Sans" fontSize="12" fill="#c0c4e4" shapeRendering="auto">{t}</text>
    ))}
    <path d="M31 190h2M31 200h2M31 210h2M31 220h2M31 250h2M31 260h2M31 270h2M31 300h2M31 310h2M31 320h2M31 340h2M31 350h2M31 395h2M31 405h2M31 415h2M31 440h2M31 450h2M31 460h2M31 490h2M31 500h2M31 510h2" stroke="#bbb" />
    {/* view buttons */}
    <g shapeRendering="auto">
      <rect x="73" y="187" width="29" height="30" fill="#0c2aa0" />
      <rect x="106" y="187" width="29" height="30" fill="#0c2aa0" />
      <g fill="none" stroke="#2a98f0" strokeWidth="1.600">
        <path d="M79 188c-3 0-2 4-2 8s0 6-2 7c2 1 2 3 2 6s-1 8 2 8M96 188c3 0 2 4 2 8s0 6 2 7c-2 1-2 3-2 6s1 8-2 8" />
        <path d="M112 188c-3 0-2 4-2 8s0 6-2 7c2 1 2 3 2 6s-1 8 2 8M129 188c3 0 2 4 2 8s0 6 2 7c-2 1-2 3-2 6s1 8-2 8" />
      </g>
      <g fill="none" stroke="#fff" strokeWidth="1.800">
        <path d="M78 203H97M83 198l-5 5 5 5M92 198l5 5-5 5" />
        <path d="M110 210H130M115 205l-5 5 5 5M125 205l5 5-5 5" />
        <path d="M110 195l2-3 2 6 2-7 2 8 2-7 2 6 2-6 2 5 2-2" strokeWidth="1.500" />
      </g>
      <path d="M31 360h3.500v38H31z" fill="#2090e0" />
      <path d="M175 360h7l6 5v28l-6 6h-7z" fill="#2ea4dc" opacity=".92" />
      <text x="177" y="385" fontFamily="Liberation Sans" fontSize="20" fill="#0a2850">{"}"}</text>
      <path d="M31 373l9 6-9 6z" fill="#86ee8c" />
    </g>
  </svg>
);

const Ruler = ({ height, base, top, label, fs, dy, major }: { height: number; base: number; top: number; label: boolean; fs: number; dy: number; major: number }) => {
  const labels: React.ReactNode[] = [];
  let ticks = "";
  for (let i = 0; i <= 24; i++) {
    const x = 30 + i * 54.3;
    const t = i === 24 ? "4" : `${Math.floor(i / 6)}:${(i % 6) * 10 === 0 ? "00" : (i % 6) * 10}`;
    labels.push(<text key={i} x={x + 2} y={base + dy} fontFamily="Liberation Sans" fontSize={fs} fill="#222">{t}</text>);
    ticks += `M${Math.round(x) + 0.5} ${base}v${major}`;
    for (let k = 1; k < 10; k++) {
      const xx = Math.round(x + k * 5.43) + 0.5;
      ticks += `M${xx} ${base}v${k === 5 ? 5 : 2.5}`;
    }
  }
  return (
    <svg width="1310" height={height} viewBox={`30 ${top} 1310 ${height}`}>
      {label && <rect x="30" y={top} width="1309" height={base - top} fill="#000" />}
      <path d={ticks} stroke="#111" fill="none" />
      {labels}
    </svg>
  );
};

const OverviewChart = () => (
  <svg width="1310" height="46" viewBox="30 612 1310 46">
    <rect x="31" y="612" width="1308" height="22" fill="#8c8c8c" />
    <rect x="31" y="634" width="1308" height="24" fill="#8a1f1f" />
    <path d={overviewSpikes} stroke="#1a1a1a" fill="none" />
    <path d="M982 612h9l-2 10 3 12-3 14 2 10h-9l1-10-2-14 2-12z" fill="#1a1a1a" />
    <rect x="1327" y="612" width="12" height="46" fill="#2c2c2c" />
    <path d="M1329 612v46M1335 612v46" stroke="#777" />
    <path d="M1327 622h12M1327 646h12" stroke="#777" />
    <path d="M187 634H1327" stroke="#3a2a2a" />
    <rect x="31" y="612" width="145" height="46" fill="#1a2aa0" />
    <rect x="31" y="612" width="9" height="46" fill="#5078d8" opacity=".8" />
    <path d="M57 612V658M84 612V658M111 612V658M139 612V658M166 612V658" stroke="#8c90c0" />
    <path d="M31 622.500H175" stroke="#f4f4f4" />
    <path d="M34 646.500H175" stroke="#e82850" strokeWidth="1.500" />
    <path d="M31 634.500H175" stroke="#454a80" />
    <path d="M31 612v46" stroke="#30b0f0" strokeWidth="2" />
    <path d="M174 612h8l6 6v33l-6 7h-8z" fill="#2ea4dc" />
    <path d="M174 614h3v42h-3z" fill="#1a80e0" />
    <text x="177" y="642" fontFamily="Liberation Sans" fontSize="22" fill="#0a2850">{"}"}</text>
    <path d="M31 628l9 6-9 6z" fill="#86ee8c" />
  </svg>
);

const Logo = () => (
  <svg width="17" height="12" viewBox="0 0 17 12">
    <path d="M0 2l3 4 3-3 2.500 3L11 3l3 3 3-5" fill="none" stroke="#d8c420" strokeWidth="1.500" />
    <path d="M0 8l3 1 3-2 2.500 1.500L11 7l3 1 3-2" fill="none" stroke="#e8d840" strokeWidth="1" />
    <rect x="0" y="10" width="5" height="2" fill="#30b040" /><rect x="5" y="10" width="6" height="2" fill="#e8d020" /><rect x="11" y="10" width="6" height="2" fill="#d02018" />
  </svg>
);

const Scale = ({ left, step, count, major, phase = 0, labels, off, minor = 3, majorH = 5, labelY = 17 }: {
  left: number; step: number; count: number; major: number; phase?: number; labels: { t: string; x: number }[]; off?: boolean; minor?: number; majorH?: number; labelY?: number;
}) => {
  let d = "";
  for (let i = 0; i < count; i++) {
    const x = Math.round(left + i * step) + 0.5;
    d += `M${x} 1v${i % major === phase ? majorH : minor}`;
  }
  return (
    <svg width="243" height="22" viewBox="0 0 243 22" style={{ display: "block" }}>
      <path d={d} stroke={off ? "#666" : "#333"} fill="none" />
      {labels.map(l => (
        <text key={l.t} x={l.x} y={labelY} textAnchor="middle" fontFamily="Noto Sans" fontSize="10" fill={off ? "#999" : "#333"}>{l.t}</text>
      ))}
    </svg>
  );
};

const Chevron = ({ c = "#555" }: { c?: string }) => (
  <svg width="10" height="6" viewBox="0 0 10 6"><path d="M1 1l4 4 4-4" fill="none" stroke={c} /></svg>
);

export default function App() {
  return (
    <Page>
      <Global />
      <TitleBar>
        <Logo />
        <AppName>GoldWave</AppName>
        <WinButtons>
          <WinButton><svg width="11" height="11"><path d="M0 5.500h10" stroke="#888" /></svg></WinButton>
          <WinButton><svg width="11" height="11"><rect x=".5" y=".5" width="9" height="9" fill="none" stroke="#888" /></svg></WinButton>
          <WinButton><svg width="11" height="11"><path d="M.5.500l10 10M10.500.500l-10 10" stroke="#888" /></svg></WinButton>
        </WinButtons>
      </TitleBar>
      <MenuBar>
        {["文件(Z)", "编辑(Y)", "效果(X)", "视图(V)", "工具(U)", "选项(T)", "窗口(W)", "帮助(S)"].map(m => <span key={m}>{m}</span>)}
      </MenuBar>
      <Toolbar>
        {row1.map((b: any) =>
          b.caret ? <Caret key={b.k} $w={b.caret} /> :
            b.sep ? <Divider key={b.k} $w={b.sep} /> :
              <ToolButton key={b.k} $w={b.w} $off={b.off}><I>{b.i}</I>{b.l}</ToolButton>
        )}
      </Toolbar>
      <IconBar>
        <Gripper />
        {row2.map((ic, i) => <IconCell key={i}><I>{ic}</I></IconCell>)}
      </IconBar>

      <ChildWindow>
        <ChildTitle>
          <Logo />
          <ChildName>BOOMBAYAH - BLACKPINK.mp3</ChildName>
          <ChildButton><svg width="12" height="8"><rect x=".5" y="2.500" width="10" height="4" rx="1" fill="#fff" stroke="#555" /></svg></ChildButton>
          <ChildButton><svg width="12" height="10"><rect x="1.500" y="1.500" width="8" height="7" rx="1" fill="#fff" stroke="#555" /><path d="M4 5h3" stroke="#555" /></svg></ChildButton>
          <ChildButton><svg width="12" height="10"><path d="M2 1l8 8M10 1L2 9" stroke="#555" strokeWidth="2.200" /><path d="M2 1l8 8M10 1L2 9" stroke="#fff" strokeWidth=".8" /></svg></ChildButton>
        </ChildTitle>
        <Client>
          <Rail>
            <RailChannel>
              <MonoBox />
              <CheckBox><svg width="12" height="10"><path d="M1 5l3 4 7-8" fill="none" stroke="#111" strokeWidth="1.800" /></svg></CheckBox>
              <RoundBox />
            </RailChannel>
            <RailChannel>
              <MonoBox $right />
              <CheckBox><svg width="12" height="10"><path d="M1 5l3 4 7-8" fill="none" stroke="#111" strokeWidth="1.800" /></svg></CheckBox>
              <RoundBox />
            </RailChannel>
          </Rail>
          <ChartCell><WaveChart /></ChartCell>
          <BlankCell />
          <ChartCell><Ruler height={38} top={573} base={584} label fs={15} dy={18} major={19} /></ChartCell>
          <BlankCell />
          <ChartCell>
            <OverviewChart />
            <Ruler height={17} top={658} base={658} label={false} fs={11} dy={14} major={15} />
          </ChartCell>
          <BlankCell />
        </Client>
      </ChildWindow>

      <Banner>
        <BannerText>{"未经许可的版本。 请点击这里购买序列号。"}</BannerText>
        <BannerButton $w={118} $size={10.5}>Buy License</BannerButton>
        <BannerButton $w={118} $size={13}>输入序列号</BannerButton>
      </Banner>
      <StatusRow>
        <StatusCell $pad={10}><Big>立体声</Big><StatusCaret $up /></StatusCell>
        <StatusCell $pad={36}>4:00.837<StatusCaret /></StatusCell>
        <StatusCell $pad={81}>0.000<Big>至</Big>26.882（26.882)<StatusCaret /></StatusCell>
        <StatusCell $pad={53}>0.000<StatusCaret $up /></StatusCell>
        <StatusCell $pad={5}>0:&nbsp;&nbsp;&nbsp;<Big>未经许可的使用</Big></StatusCell>
      </StatusRow>
      <StatusRow>
        <StatusCell $center><Big>改性</Big></StatusCell>
        <StatusCell $pad={42}>4:00.8<StatusCaret /></StatusCell>
        <StatusCell $pad={4}>MP3 44100 Hz, 320 kbps,&nbsp;<Big>联合立体声</Big></StatusCell>
        <StatusCell />
        <StatusCell />
      </StatusRow>

      <Dialog>
        <DialogTitle>
          音高
          <svg width="12" height="12"><path d="M1 1l10 10M11 1L1 11" stroke="#333" /></svg>
        </DialogTitle>
        <Group $h={127} $mt={14} $pt={10}>
          <Legend $x={10}>按比例因子或相对半音改变音高</Legend>
          <SlideRow $h={38}>
            <RowLabel><Radio $on />比例（%）<Colon>:</Colon></RowLabel>
            <SlideCol>
              <Track>
                <TrackEnd $w={13}>−</TrackEnd>
                <TrackDark />
                <TrackThumb />
                <TrackRest />
                <TrackEnd $w={11}>+</TrackEnd>
              </Track>
              <Scale left={21} step={2.68} count={75} major={5}
                labels={[60, 80, 100, 120, 140, 160, 180, 200].map((v, i) => ({ t: String(v), x: 34 + i * 26.7 }))} labelY={17} />
            </SlideCol>
            <NumBox>84.33</NumBox>
          </SlideRow>
          <SlideRow $h={36}>
            <RowLabel $shift={1}><Radio />半音<Colon>:</Colon></RowLabel>
            <SlideCol>
              <Track $off>
                <TrackEnd $w={13} $off>−</TrackEnd>
                <TrackRest $off />
                <TrackEnd $w={11} $off>+</TrackEnd>
              </Track>
              <Scale off left={21} step={8.35} count={25} major={5} phase={2} minor={1} majorH={6}
                labels={[["-10", 38], ["-5", 80], ["0", 122], ["5", 163], ["10", 205]].map(([t, x]) => ({ t: String(t), x: Number(x) }))} labelY={17} />
            </SlideCol>
            <NumBox $off>0</NumBox>
          </SlideRow>
          <SlideRow $h={36}>
            <RowLabel $off $indent={52} $shift={-1}>微调<Colon>:</Colon></RowLabel>
            <SlideCol>
              <Track $off>
                <TrackEnd $w={13} $off>−</TrackEnd>
                <TrackRest $off />
                <TrackEnd $w={11} $off>+</TrackEnd>
              </Track>
              <Scale off left={31} step={10.2} count={19} major={5} phase={4} minor={1} majorH={6}
                labels={[["-50", 70], ["0", 121], ["50", 172]].map(([t, x]) => ({ t: String(t), x: Number(x) }))} labelY={16} />
            </SlideCol>
            <NumBox $off>0</NumBox>
          </SlideRow>
        </Group>
        <Group $h={52} $mt={13}>
          <Legend $x={9}><svg width="13" height="13"><rect x=".5" y=".5" width="12" height="12" fill="#fff" stroke="#333" /></svg>保持节奏</Legend>
          <OptRow>
            <OptLabel $w={60} $ml={53}>FFT大小 :</OptLabel>
            <Spin>11</Spin>
            <SpinBtns><SpinTip /><SpinTip $down /></SpinBtns>
            <OptLabel $w={40} $ml={80}>重叠 :</OptLabel>
            <Drop>4X<Chevron c="#888" /></Drop>
          </OptRow>
        </Group>
        <PresetLine>
          <Group $h={44} $mt={0} $ml={54} $w={309}>
            <Legend $x={6}>&nbsp;预设&nbsp;</Legend>
            <PresetInner>
              <Combo><TextCaret /><Chevron /></Combo>
              <IconBtn $w={23} $off>
                <svg width="16" height="16"><path d="M5 1h6v4h4v6h-4v4H5v-4H1V5h4z" fill="#58b868" /></svg>
              </IconBtn>
              <IconBtn $w={23} $off>
                <svg width="16" height="6"><rect x="1" y="0" width="14" height="5" rx="1" fill="#d85868" /></svg>
              </IconBtn>
            </PresetInner>
          </Group>
          <PlayGroup>
            <IconBtn $w={26}><svg width="16" height="16"><path d="M1 0l14 8-14 8z" fill="#10c810" /></svg></IconBtn>
            <IconBtn $w={26}><svg width="11" height="11"><rect width="11" height="11" fill="#0a5cf0" /></svg></IconBtn>
          </PlayGroup>
        </PresetLine>
        <Footer>
          <FootBtn $primary>OK</FootBtn>
          <FootBtn>取消</FootBtn>
          <FootBtn $off>更新</FootBtn>
          <FootBtn>帮助</FootBtn>
        </Footer>
        <Highlight $x={9} $y={50} $w={82} $h={26} />
        <Highlight $x={355} $y={46} $w={60} $h={29} />
        <ArrowLayer width="440" height="80" viewBox="0 0 440 80">
          <path d="M260 29L223 42l-2-3-23 16 28-3-2-4 38-16z" fill="#d81a1a" stroke="#d81a1a" strokeWidth=".5" />
        </ArrowLayer>
      </Dialog>

      <Watermark>
        <svg width="48" height="48" viewBox="0 0 48 48">
          <path d="M42 8C24 4 4 16 6 28c1 6 10 6 20 2-8 1-14 0-13-5 1-7 14-14 29-17z" fill="#4a9bd0" opacity=".75" />
          <path d="M14 40c12 6 26-4 28-14 1-5-6-7-14-5 5 0 8 2 6 6-3 6-10 11-20 13z" fill="#8cc850" opacity=".75" />
        </svg>
        <MarkTitle>极光下载站</MarkTitle>
        <MarkUrl>www.xz7.com</MarkUrl>
      </Watermark>
    </Page>
  );
}
